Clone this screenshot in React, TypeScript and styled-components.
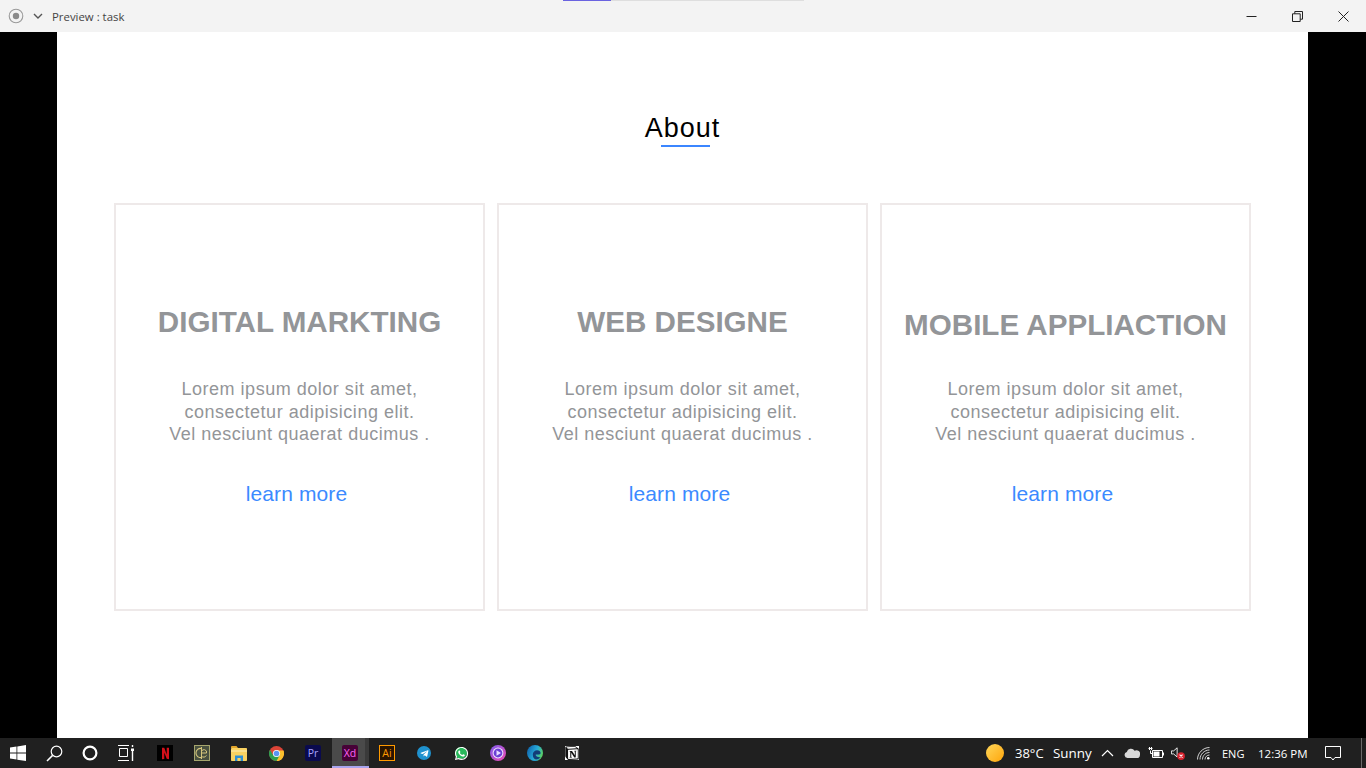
import React from "react";
import styled, { createGlobalStyle } from "styled-components";
import { FaWhatsapp, FaTelegramPlane } from "react-icons/fa";
import { SiNotion } from "react-icons/si";

const cards = [
  { title: "DIGITAL MARKTING", drop: 0 },
  { title: "WEB DESIGNE", drop: 0 },
  { title: "MOBILE APPLIACTION", drop: 3 },
];

export default function App() {
  return (
    <>
      <GlobalStyle />
      <Screen>
        <TitleBar>
          <TitleLeft>
            <svg width="16" height="16" viewBox="0 0 16 16">
              <circle cx="8" cy="8" r="6.8" fill="none" stroke="#9a9a9a" strokeWidth="1.1" />
              <circle cx="8" cy="8" r="3.2" fill="#8a8a8a" />
            </svg>
            <ChevronSlot>
              <svg width="10" height="7" viewBox="0 0 10 7">
                <path d="M1 1l4 4 4-4" fill="none" stroke="#555" strokeWidth="1.4" />
              </svg>
            </ChevronSlot>
            <WindowName>Preview : task</WindowName>
          </TitleLeft>
          <Progress>
            <ProgressDone />
          </Progress>
          <WindowControls>
            <ControlButton>
              <svg width="11" height="11" viewBox="0 0 11 11">
                <path d="M0.5 5.5h10" stroke="#222" strokeWidth="1" />
              </svg>
            </ControlButton>
            <ControlButton>
              <svg width="11" height="11" viewBox="0 0 11 11">
                <path
                  d="M0.5 2.8h7.7v7.7H0.5zM2.8 2.8V0.5h7.7v7.7H8.2"
                  fill="none"
                  stroke="#222"
                  strokeWidth="1"
                />
              </svg>
            </ControlButton>
            <ControlButton>
              <svg width="11" height="11" viewBox="0 0 11 11">
                <path d="M0.5 0.5l10 10M10.5 0.5l-10 10" stroke="#222" strokeWidth="1" />
              </svg>
            </ControlButton>
          </WindowControls>
        </TitleBar>

        <Stage>
          <Artboard>
            <SectionHead>
              <SectionTitle>About</SectionTitle>
              <TitleRule />
            </SectionHead>
            <CardGrid>
              {cards.map((card) => (
                <Card key={card.title}>
                  <CardTitle $drop={card.drop}>{card.title}</CardTitle>
                  <CardText>
                    Lorem ipsum dolor sit amet,
                    <br />
                    consectetur adipisicing elit.
                    <br />
                    Vel nesciunt quaerat ducimus .
                  </CardText>
                  <LearnMore href="#">learn more</LearnMore>
                </Card>
              ))}
            </CardGrid>
          </Artboard>
        </Stage>

        <Taskbar>
          <SystemSlot>
            <svg width="16" height="16" viewBox="0 0 16 16" fill="#fff">
              <path d="M0 2.4l6.5-.9v6.1H0zM7.3 1.4L16 0v7.6H7.3zM0 8.4h6.5v6.1L0 13.6zM7.3 8.4H16V16l-8.7-1.3z" />
            </svg>
          </SystemSlot>
          <SystemSlot>
            <svg width="17" height="17" viewBox="0 0 17 17" fill="none" stroke="#fff">
              <circle cx="10.5" cy="6.5" r="5.3" strokeWidth="1.2" />
              <path d="M6.6 10.4L1 16" strokeWidth="1.5" />
            </svg>
          </SystemSlot>
          <SystemSlot>
            <svg width="16" height="16" viewBox="0 0 16 16" fill="none">
              <circle cx="8" cy="8" r="6.4" stroke="#fff" strokeWidth="2.2" />
            </svg>
          </SystemSlot>
          <SystemSlot>
            <svg width="16" height="16" viewBox="0 0 16 16" fill="none" stroke="#fff" strokeWidth="1">
              <path d="M0 0.5h11M0 15.5h11M1.5 3.500h8v8h-8z" />
              <path d="M14.5 0v2M14.5 6v10" strokeWidth="1.4" />
              <path d="M13 3.5h3v2.5h-3z" fill="#fff" stroke="none" />
            </svg>
          </SystemSlot>

          <AppList>
            <AppSlot>
              <NetflixTile>
                <svg width="7" height="13" viewBox="0 0 8 13">
                  <path d="M0 0h2.6l2.8 7.600V0H8v13l-2.600-.4L2.600 5.400V12.700L0 13z" fill="#d3101a" />
                </svg>
              </NetflixTile>
            </AppSlot>
            <AppSlot>
              <svg width="16" height="16" viewBox="0 0 16 16" fill="none">
                <rect x="0.5" y="0.5" width="15" height="15" fill="#48503f" stroke="#a6a56d" />
                <path d="M7.5 3.5a4.6 4.6 0 1 0 0 9" stroke="#d6c67d" strokeWidth="1.1" />
                <path d="M7.5 2v12M7.5 8h5a2.600 2.600 0 0 0-5-1.500M12.400 10.400a3 3 0 0 1-4.900.8" stroke="#d6c67d" strokeWidth="1" />
              </svg>
            </AppSlot>
            <AppSlot>
              <svg width="16" height="15" viewBox="0 0 16 15">
                <path d="M0 1a1 1 0 0 1 1-1h4.500l1.500 2H0z" fill="#e2a52a" />
                <rect y="2" width="16" height="13" rx="0.8" fill="#f9d262" />
                <rect y="4" width="16" height="2" fill="#fbe08d" />
                <path d="M4 15V9.500h8V15h-2.400v-3H6.400v3z" fill="#2d8fd5" />
              </svg>
            </AppSlot>
            <AppSlot>
              <svg width="15" height="15" viewBox="0 0 15 15">
                <circle cx="7.5" cy="7.5" r="7.5" fill="#dc4437" />
                <path d="M7.500 15a7.500 7.500 0 0 0 7-10.400H7.500z" fill="#fbc02d" />
                <path d="M1 3.700A7.500 7.500 0 0 0 7.500 15l3.400-6H4z" fill="#2f9e50" />
                <circle cx="7.5" cy="7.5" r="3.600" fill="#fff" />
                <circle cx="7.5" cy="7.5" r="2.800" fill="#5a95f5" />
              </svg>
            </AppSlot>
            <AppSlot>
              <AdobeTile $bg="#0a0a4e" $fg="#a8a4ff">Pr</AdobeTile>
            </AppSlot>
            <AppSlot $active>
              <AdobeTile $bg="#470137" $fg="#ff61f6">Xd</AdobeTile>
            </AppSlot>
            <AppSlot>
              <AdobeTile $bg="#2a1500" $fg="#ff9a00" $outlined>Ai</AdobeTile>
            </AppSlot>
            <AppSlot>
              <RoundBadge $bg="#1f92cf" $size={14}>
                <FaTelegramPlane size={9} color="#fff" />
              </RoundBadge>
            </AppSlot>
            <AppSlot>
              <RoundBadge $bg="#28b85a" $size={12}>
                <FaWhatsapp size={15} color="#fff" />
              </RoundBadge>
            </AppSlot>
            <AppSlot>
              <svg width="16" height="16" viewBox="0 0 16 16">
                <defs>
                  <linearGradient id="ringGrad" x1="0" y1="0" x2="1" y2="1">
                    <stop offset="0" stopColor="#7d5cf0" />
                    <stop offset="1" stopColor="#f04ab0" />
                  </linearGradient>
                </defs>
                <circle cx="8" cy="8" r="8" fill="url(#ringGrad)" />
                <circle cx="8" cy="8" r="5.400" fill="#f0e4ff" />
                <circle cx="8" cy="8" r="4.400" fill="#6a3fd6" />
                <path d="M6.500 5.200v5.600L11 8z" fill="#e6dcff" />
              </svg>
            </AppSlot>
            <AppSlot>
              <svg width="16" height="16" viewBox="0 0 16 16">
                <defs>
                  <linearGradient id="edgeBase" x1="0" y1="0.2" x2="1" y2="0.6">
                    <stop offset="0" stopColor="#0f62ac" />
                    <stop offset="0.55" stopColor="#27a9d8" />
                    <stop offset="1" stopColor="#5ed45c" />
                  </linearGradient>
                </defs>
                <circle cx="8" cy="8" r="8" fill="url(#edgeBase)" />
                <path d="M5.800 9.500C5.800 6.800 8 5.200 10 5.200c2.200 0 3.600 1.300 3.600 2.800 0 .9-.6 1.400-1.500 1.400H9.300c-.6 0-.8.5-.4 1.200.8 1.300 2.500 2 4.600 1.600-1.200 1.500-3 2.300-4.500 2.200-1.900-.1-3.200-2.100-3.200-4.900z" fill="#123d78" />
                <path d="M13.500 12.400A8 8 0 0 1 8 16c-1 0-2-.2-2.800-.6 2.800.3 5.800-.7 8.300-3z" fill="#1e8fd8" />
              </svg>
            </AppSlot>
            <AppSlot>
              <NotionTile>
                <SiNotion size={14} color="#111" />
              </NotionTile>
            </AppSlot>
          </AppList>

          <Tray>
            <svg width="18" height="18" viewBox="0 0 18 18">
              <defs>
                <linearGradient id="sunGrad" x1="0" y1="0" x2="1" y2="1">
                  <stop offset="0" stopColor="#ffd75a" />
                  <stop offset="1" stopColor="#ffa50a" />
                </linearGradient>
              </defs>
              <circle cx="9" cy="9" r="9" fill="url(#sunGrad)" />
            </svg>
            <Weather>38°C</Weather>
            <WeatherWord>Sunny</WeatherWord>
            <TraySlot $w={32}>
              <svg width="13" height="8" viewBox="0 0 13 8">
                <path d="M1 7l5.500-5.500L12 7" fill="none" stroke="#fff" strokeWidth="1.2" />
              </svg>
            </TraySlot>
            <TraySlot $w={18}>
              <svg width="16" height="10" viewBox="0 0 16 10">
                <path d="M3.500 10a3 3 0 0 1-.7-5.900A4.300 4.300 0 0 1 10.600 2.700 3.700 3.700 0 0 1 15.900 7.200 2.900 2.900 0 0 1 13 10z" fill="#d9d9d9" />
              </svg>
            </TraySlot>
            <TraySlot $w={30}>
              <svg width="16" height="12" viewBox="0 0 16 12" fill="none" stroke="#fff">
                <path d="M4.500 3.500h10v7h-10z" />
                <path d="M5.500 4.500h6v5h-6z" fill="#fff" stroke="none" />
                <path d="M15.500 5.500v3" />
                <path d="M0.500 1.500h4M1.500 0v3M3.500 0v3M2.500 3.500v3h2" />
              </svg>
            </TraySlot>
            <TraySlot $w={14}>
              <svg width="16" height="15" viewBox="0 0 16 15" fill="none">
                <path d="M0.500 4.500h2.500l4-3.500v10.500l-4-3.500H0.500z" stroke="#fff" />
                <circle cx="11.500" cy="10.500" r="4.300" fill="#d9232e" />
                <path d="M9.800 8.800l3.400 3.400M13.200 8.800l-3.400 3.400" stroke="#fff" strokeWidth="1.200" />
              </svg>
            </TraySlot>
            <TraySlot $w={37}>
              <svg width="13" height="13" viewBox="0 0 13 13" fill="none" stroke="#e5e5e5">
                <path d="M0.500 12.500C.5 6 6 .5 12.500 .5M3 12.500C3 7.300 7.300 3 12.500 3M5.500 12.500c0-3.900 3.100-7 7-7M8 12.500c0-2.500 2-4.500 4.500-4.500" strokeWidth="0.9" />
                <circle cx="11.300" cy="11.300" r="1.300" fill="#fff" stroke="none" />
              </svg>
            </TraySlot>
            <TrayLang>ENG</TrayLang>
            <Clock>12:36 PM</Clock>
            <TraySlot $w={54}>
              <svg width="16" height="15" viewBox="0 0 16 15" fill="none">
                <path d="M0.500 0.500h15v11h-5.500l-2 2.500-2-2.500H0.500z" stroke="#fff" />
              </svg>
            </TraySlot>
            <DesktopPeek />
          </Tray>
        </Taskbar>
      </Screen>
    </>
  );
}

const GlobalStyle = createGlobalStyle`
  html, body {
    margin: 0;
    padding: 0;
    background: #000;
  }
  * {
    box-sizing: border-box;
  }
`;

const Screen = styled.div`
  width: 1366px;
  height: 768px;
  display: flex;
  flex-direction: column;
  overflow: hidden;
  font-family: "Liberation Sans", Arial, sans-serif;
`;

const TitleBar = styled.header`
  height: 32px;
  flex-shrink: 0;
  display: flex;
  background: #f3f3f3;
`;

const TitleLeft = styled.div`
  width: 563px;
  padding-left: 8px;
  display: flex;
  align-items: center;
`;

const ChevronSlot = styled.span`
  width: 28px;
  display: flex;
  justify-content: center;
`;

const WindowName = styled.span`
  font-family: "Open Sans", "Noto Sans", sans-serif;
  font-size: 11.4px;
  color: #444;
`;

const Progress = styled.div`
  width: 241px;
  height: 1px;
  background: #dedede;
`;

const ProgressDone = styled.div`
  width: 48px;
  height: 1px;
  background: #6a63e0;
`;

const WindowControls = styled.div`
  margin-left: auto;
  display: flex;
`;

const ControlButton = styled.div`
  width: 46px;
  height: 32px;
  display: flex;
  align-items: center;
  justify-content: center;
`;

const Stage = styled.main`
  flex: 1;
  display: flex;
  justify-content: center;
  background: #000;
  padding-right: 1px;
`;

const Artboard = styled.section`
  width: 1251px;
  padding: 80px 57px 0;
  background: #fff;
`;

const SectionHead = styled.div`
  display: flex;
  flex-direction: column;
  align-items: center;
`;

const SectionTitle = styled.h1`
  margin: 0;
  font-size: 27px;
  line-height: 32px;
  font-weight: 400;
  letter-spacing: 1px;
  color: #000;
`;

const TitleRule = styled.div`
  width: 49px;
  height: 2px;
  margin: 1px 0 0 6px;
  background: #3b86ff;
`;

const CardGrid = styled.div`
  margin-top: 56px;
  display: grid;
  grid-template-columns: repeat(3, 371px);
  gap: 12px;
`;

const Card = styled.article`
  height: 408px;
  padding-top: 99px;
  display: flex;
  flex-direction: column;
  align-items: center;
  text-align: center;
  border: 2px solid #eee9e9;
`;

const CardTitle = styled.h2<{ $drop: number }>`
  margin: 0;
  height: 36px;
  padding-top: ${(p) => p.$drop}px;
  font-size: 29.6px;
  line-height: 36px;
  font-weight: 700;
  color: #939598;
  white-space: nowrap;
`;

const CardText = styled.p`
  margin: 38px 0 0;
  font-size: 18px;
  line-height: 22.5px;
  letter-spacing: 0.52px;
  color: #939598;
`;

const LearnMore = styled.a`
  margin-top: 35px;
  padding-right: 6px;
  font-size: 21px;
  line-height: 26px;
  letter-spacing: 0.1px;
  color: #3b8aff;
  text-decoration: none;
`;

const Taskbar = styled.footer`
  height: 30px;
  flex-shrink: 0;
  display: flex;
  align-items: stretch;
  background: #202020;
`;

const SystemSlot = styled.div`
  width: 36px;
  display: flex;
  align-items: center;
  justify-content: center;
`;

const AppList = styled.div`
  margin-left: 2.5px;
  display: flex;
`;

const AppSlot = styled.div<{ $active?: boolean }>`
  width: 37px;
  display: flex;
  align-items: center;
  justify-content: center;
  background: ${(p) =>
    p.$active
      ? "linear-gradient(to right, #4a4a4a 89%, #3a3a3a 89%)"
      : "transparent"};
  border-bottom: 2px solid ${(p) => (p.$active ? "#a9a4ee" : "transparent")};
  border-top: 2px solid transparent;
`;

const NetflixTile = styled.div`
  width: 16px;
  height: 16px;
  display: flex;
  align-items: center;
  justify-content: center;
  background: #000;
`;

const AdobeTile = styled.div<{ $bg: string; $fg: string; $outlined?: boolean }>`
  width: 16px;
  height: 16px;
  display: flex;
  align-items: center;
  justify-content: center;
  border-radius: ${(p) => (p.$outlined ? "0" : "2px")};
  border: ${(p) => (p.$outlined ? `1px solid ${p.$fg}` : "none")};
  background: ${(p) => p.$bg};
  color: ${(p) => p.$fg};
  font-family: "Open Sans", "Noto Sans", sans-serif;
  font-size: 10.5px;
  line-height: 1;
`;

const RoundBadge = styled.div<{ $bg: string; $size: number }>`
  width: ${(p) => p.$size}px;
  height: ${(p) => p.$size}px;
  display: flex;
  align-items: center;
  justify-content: center;
  border-radius: 50%;
  background: ${(p) => p.$bg};

  svg {
    flex: none;
  }
`;

const NotionTile = styled.div`
  width: 14px;
  height: 14px;
  display: flex;
  background: #fff;
`;

const Tray = styled.div`
  margin-left: auto;
  display: flex;
  align-items: center;
  color: #fff;
  font-family: "Open Sans", "Noto Sans", sans-serif;
`;

const Weather = styled.span`
  width: 38px;
  margin-left: 11px;
  font-size: 13px;
`;

const WeatherWord = styled.span`
  width: 38px;
  font-size: 13.4px;
`;

const TraySlot = styled.div<{ $w: number }>`
  width: ${(p) => p.$w}px;
  display: flex;
  justify-content: center;
`;

const TrayLang = styled.span`
  width: 36px;
  font-size: 11px;
`;

const Clock = styled.span`
  width: 48px;
  font-size: 11.5px;
  white-space: nowrap;
`;

const DesktopPeek = styled.div`
  width: 1px;
  height: 30px;
  margin-left: 1px;
  margin-right: 4px;
  background: #6a6a6a;
`;
